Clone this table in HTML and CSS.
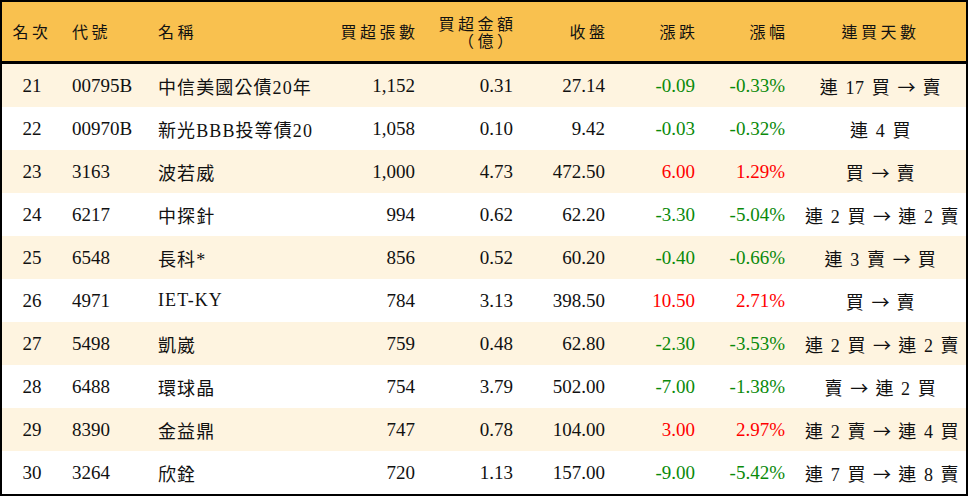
FILE: index.html
```html
<!DOCTYPE html>
<html lang="zh-Hant">
<head>
<meta charset="utf-8">
<title>買超排行</title>
<link rel="stylesheet" href="styles.css">
</head>
<body>
<div class="board">
  <div class="row head">
    <div class="c ctr">名次</div>
    <div class="c">代號</div>
    <div class="c">名稱</div>
    <div class="c num">買超張數</div>
    <div class="c num two"><span class="ln">買超金額</span><span class="ln">（億）</span></div>
    <div class="c num">收盤</div>
    <div class="c num">漲跌</div>
    <div class="c num">漲幅</div>
    <div class="c ctr">連買天數</div>
  </div>

  <div class="row odd">
    <div class="c ctr">21</div><div class="c">00795B</div><div class="c zh">中信美國公債20年</div>
    <div class="c num">1,152</div><div class="c num">0.31</div><div class="c num">27.14</div>
    <div class="c num dn">-0.09</div><div class="c num dn">-0.33%</div><div class="c ctr zh st">連 17 買 <span class="arr">→</span> 賣</div>
  </div>
  <div class="row">
    <div class="c ctr">22</div><div class="c">00970B</div><div class="c zh">新光BBB投等債20</div>
    <div class="c num">1,058</div><div class="c num">0.10</div><div class="c num">9.42</div>
    <div class="c num dn">-0.03</div><div class="c num dn">-0.32%</div><div class="c ctr zh st">連 4 買</div>
  </div>
  <div class="row odd">
    <div class="c ctr">23</div><div class="c">3163</div><div class="c zh">波若威</div>
    <div class="c num">1,000</div><div class="c num">4.73</div><div class="c num">472.50</div>
    <div class="c num up">6.00</div><div class="c num up">1.29%</div><div class="c ctr zh st">買 <span class="arr">→</span> 賣</div>
  </div>
  <div class="row">
    <div class="c ctr">24</div><div class="c">6217</div><div class="c zh">中探針</div>
    <div class="c num">994</div><div class="c num">0.62</div><div class="c num">62.20</div>
    <div class="c num dn">-3.30</div><div class="c num dn">-5.04%</div><div class="c ctr zh st">連 2 買 <span class="arr">→</span> 連 2 賣</div>
  </div>
  <div class="row odd">
    <div class="c ctr">25</div><div class="c">6548</div><div class="c zh">長科*</div>
    <div class="c num">856</div><div class="c num">0.52</div><div class="c num">60.20</div>
    <div class="c num dn">-0.40</div><div class="c num dn">-0.66%</div><div class="c ctr zh st">連 3 賣 <span class="arr">→</span> 買</div>
  </div>
  <div class="row">
    <div class="c ctr">26</div><div class="c">4971</div><div class="c zh">IET-KY</div>
    <div class="c num">784</div><div class="c num">3.13</div><div class="c num">398.50</div>
    <div class="c num up">10.50</div><div class="c num up">2.71%</div><div class="c ctr zh st">買 <span class="arr">→</span> 賣</div>
  </div>
  <div class="row odd">
    <div class="c ctr">27</div><div class="c">5498</div><div class="c zh">凱崴</div>
    <div class="c num">759</div><div class="c num">0.48</div><div class="c num">62.80</div>
    <div class="c num dn">-2.30</div><div class="c num dn">-3.53%</div><div class="c ctr zh st">連 2 買 <span class="arr">→</span> 連 2 賣</div>
  </div>
  <div class="row">
    <div class="c ctr">28</div><div class="c">6488</div><div class="c zh">環球晶</div>
    <div class="c num">754</div><div class="c num">3.79</div><div class="c num">502.00</div>
    <div class="c num dn">-7.00</div><div class="c num dn">-1.38%</div><div class="c ctr zh st">賣 <span class="arr">→</span> 連 2 買</div>
  </div>
  <div class="row odd">
    <div class="c ctr">29</div><div class="c">8390</div><div class="c zh">金益鼎</div>
    <div class="c num">747</div><div class="c num">0.78</div><div class="c num">104.00</div>
    <div class="c num up">3.00</div><div class="c num up">2.97%</div><div class="c ctr zh st">連 2 賣 <span class="arr">→</span> 連 4 買</div>
  </div>
  <div class="row">
    <div class="c ctr">30</div><div class="c">3264</div><div class="c zh">欣銓</div>
    <div class="c num">720</div><div class="c num">1.13</div><div class="c num">157.00</div>
    <div class="c num dn">-9.00</div><div class="c num dn">-5.42%</div><div class="c ctr zh st">連 7 買 <span class="arr">→</span> 連 8 賣</div>
  </div>
</div>
</body>
</html>
```

FILE: styles.css
```css
html, body {
  margin: 0;
  padding: 0;
  background: #ffffff;
}

.board {
  box-sizing: border-box;
  width: 968px;
  height: 496px;
  border: 2px solid #000000;
  font-family: "Liberation Serif", "Noto Sans CJK TC", serif;
  font-size: 19px;
  color: #111111;
  overflow: hidden;
}

.row {
  display: grid;
  grid-template-columns: 60px 86px 182px 95px 98px 92px 90px 90px 171px;
  height: 43px;
  align-items: center;
  background: #ffffff;
}

.row.odd {
  background: #fef4e0;
}

.row.head {
  height: 59px;
  background: #f9c14f;
  border-bottom: 3px solid #000000;
  font-family: "Noto Sans CJK TC", sans-serif;
  font-size: 16px;
  font-weight: 400;
  letter-spacing: 3.5px;
  line-height: 19px;
  color: #111111;
}

.c {
  padding: 0 10px;
  white-space: nowrap;
}

.num {
  text-align: right;
}

.head .num {
  padding-right: 6.5px;
}

.two {
  display: flex;
  flex-direction: column;
  align-items: flex-end;
}

.ln {
  display: block;
  height: 17px;
  line-height: 17px;
}

.ctr {
  text-align: center;
}

.zh {
  font-size: 18px;
  letter-spacing: 1.1px;
}

.st {
  letter-spacing: 0.6px;
  word-spacing: 2px;
}

.arr {
  font-family: "Noto Sans CJK TC", sans-serif;
  letter-spacing: 0;
}

.dn {
  color: #0a8a0a;
}

.up {
  color: #ff0000;
}
```
